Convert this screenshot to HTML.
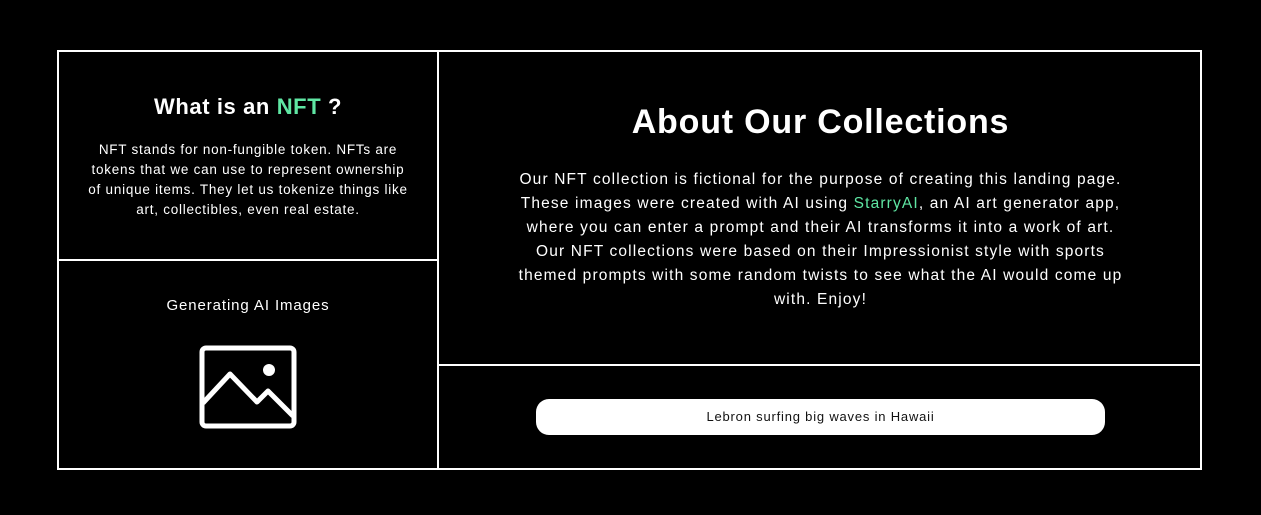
<!DOCTYPE html>
<html><head><style>
*{margin:0;padding:0;box-sizing:border-box}
body{width:1261px;height:515px;background:#000;color:#fff;font-family:"Liberation Sans",sans-serif;position:relative;overflow:hidden}
.b{position:absolute;border:2px solid #fff}
.t{position:absolute;text-align:center;white-space:nowrap}
.g{color:#5fe6a3}
</style></head><body>
<div class="b" style="left:57px;top:50px;width:1145px;height:420px"></div>
<div style="position:absolute;left:437px;top:50px;width:2px;height:420px;background:#fff"></div>
<div style="position:absolute;left:57px;top:259px;width:382px;height:2px;background:#fff"></div>
<div style="position:absolute;left:439px;top:364px;width:763px;height:2px;background:#fff"></div>

<div class="t" style="left:59px;width:378px;top:94px;font-size:22px;font-weight:bold;letter-spacing:0.6px">What is an <span class="g">NFT</span> ?</div>
<div class="t" style="left:59px;width:378px;top:140px;font-size:13.5px;line-height:20px;letter-spacing:0.75px">NFT stands for non-fungible token. NFTs are<br>tokens that we can use to represent ownership<br>of unique items. They let us tokenize things like<br>art, collectibles, even real estate.</div>
<div class="t" style="left:59px;width:378px;top:297px;font-size:15px;letter-spacing:0.9px">Generating AI Images</div>
<svg style="position:absolute;left:199px;top:345px" width="98" height="84" viewBox="0 0 98 84">
<rect x="3" y="3" width="92" height="78" rx="4" fill="none" stroke="#fff" stroke-width="5"/>
<circle cx="70" cy="25" r="6" fill="#fff"/>
<polyline points="4,58 31,29 58,57 69,46 94,71" fill="none" stroke="#fff" stroke-width="5" stroke-linejoin="round"/>
</svg>

<div class="t" style="left:439px;width:763px;top:103px;font-size:34px;font-weight:bold;letter-spacing:0.8px">About Our Collections</div>
<div class="t" style="left:439px;width:763px;top:168px;font-size:15.5px;line-height:24px;letter-spacing:1.15px">Our NFT collection is fictional for the purpose of creating this landing page.<br>These images were created with AI using <span class="g">StarryAI</span>, an AI art generator app,<br>where you can enter a prompt and their AI transforms it into a work of art.<br>Our NFT collections were based on their Impressionist style with sports<br>themed prompts with some random twists to see what the AI would come up<br>with. Enjoy!</div>
<div style="position:absolute;left:536px;top:399px;width:569px;height:36px;background:#fff;border-radius:13px;color:#111;font-size:13px;text-align:center;line-height:36px;letter-spacing:0.8px">Lebron surfing big waves in Hawaii</div>
</body></html>
